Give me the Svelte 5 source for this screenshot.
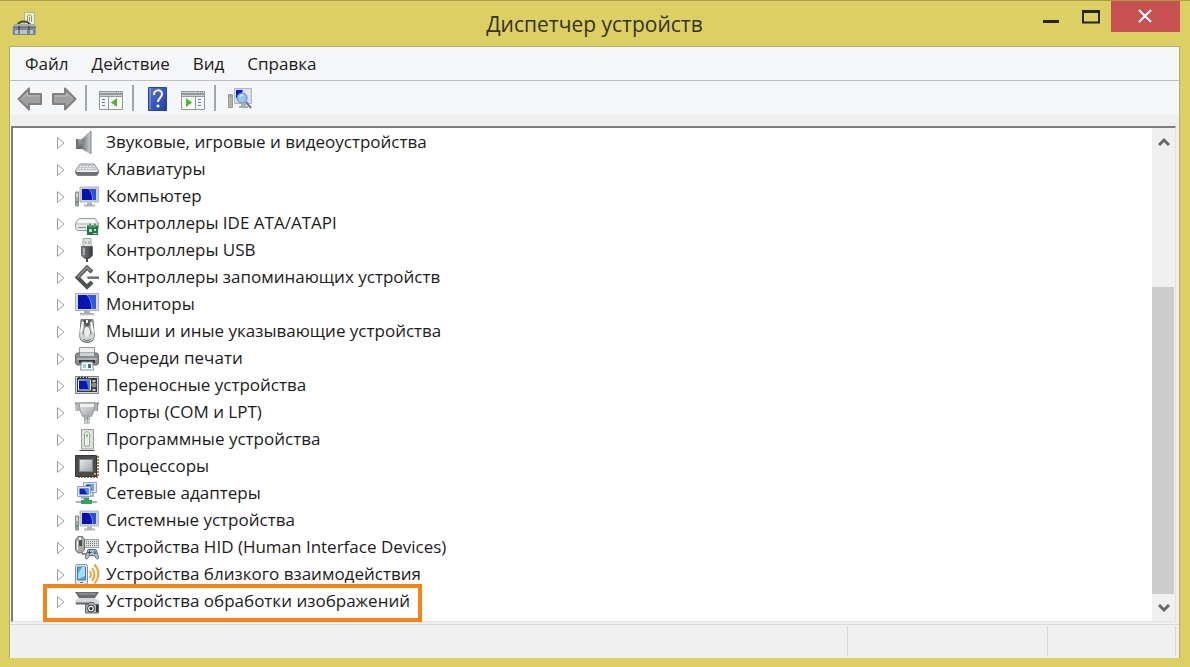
<script lang="ts">
  type Device = { icon: string; label: string; marked?: boolean }

  const menus = ['Файл', 'Действие', 'Вид', 'Справка']

  const devices: Device[] = [
    { icon: 'sound', label: 'Звуковые, игровые и видеоустройства' },
    { icon: 'keyboard', label: 'Клавиатуры' },
    { icon: 'computer', label: 'Компьютер' },
    { icon: 'ide', label: 'Контроллеры IDE ATA/ATAPI' },
    { icon: 'usb', label: 'Контроллеры USB' },
    { icon: 'storage', label: 'Контроллеры запоминающих устройств' },
    { icon: 'monitor', label: 'Мониторы' },
    { icon: 'mouse', label: 'Мыши и иные указывающие устройства' },
    { icon: 'printer', label: 'Очереди печати' },
    { icon: 'portable', label: 'Переносные устройства' },
    { icon: 'port', label: 'Порты (COM и LPT)' },
    { icon: 'software', label: 'Программные устройства' },
    { icon: 'cpu', label: 'Процессоры' },
    { icon: 'network', label: 'Сетевые адаптеры' },
    { icon: 'computer', label: 'Системные устройства' },
    { icon: 'hid', label: 'Устройства HID (Human Interface Devices)' },
    { icon: 'nfc', label: 'Устройства близкого взаимодействия' },
    { icon: 'imaging', label: 'Устройства обработки изображений', marked: true },
  ]

  let selected = $state('')
</script>

{#snippet deviceIcon(name: string)}
  <svg class="icon" viewBox="0 0 24 24" aria-hidden="true">
    {#if name === 'sound'}
      <path d="M1 9h7v10H1z" fill="url(#steel)" />
      <path d="M1 9h2v10H1z" fill="#6c6f71" />
      <path d="M7 9 15 1h1.500v23H15L7 19z" fill="url(#cone)" />
      <path d="M15 1h1.500v23H15z" fill="#9b9fa2" />
    {:else if name === 'keyboard'}
      <path d="M5 7h14l4.500 6.500v3l-2 2h-19l-2-2v-3z" fill="#dfe2e4" stroke="#8b8f92" />
      <path d="M5.500 8h13l3 5H2.500z" fill="#c2c5c7" />
      <path d="M5 9.500h14M4 11.500h16" stroke="#eef0f1" stroke-dasharray="2 1" />
      <path d="M1 14.500h22v2l-1.500 2h-19L1 16.500z" fill="#6c7073" />
      <path d="M2 14.500h20" stroke="#f5f5f5" />
    {:else if name === 'computer'}
      <path d="M5 3h18.500v15H5z" fill="#c8cdd0" stroke="#b3b8bb" />
      <path d="M7 5h14v11H7z" fill="#0713ad" />
      <path d="M14 5h7v11h-3c0-4-1-8-4-11z" fill="#2850d8" />
      <path d="M14 5c3 3 3.500 7 3.500 11" fill="none" stroke="#6d91f0" />
      <path d="M12 18.500h5v2h3v2H9v-2h3z" fill="#aeb4b7" />
      <path d="M.5 8h3v14h-3z" fill="#a4aaab" stroke="#878d8f" />
      <path d="M1 10h2M1 12h2" stroke="#fff" />
      <path d="M1 18h2" stroke="#43b649" stroke-width="2" />
    {:else if name === 'ide'}
      <path d="M4 7.500h16c2 2 3.500 4 3.500 6v3c0 2-1 3-3 3h-17c-2 0-3-1-3-3v-3c0-2 1.500-4 3.500-6z" fill="#e6e8e8" stroke="#969a9b" />
      <path d="M4 8.500h15l2.500 4h-20z" fill="#f7f7f7" />
      <path d="M1 13h22" stroke="#b1b5b5" />
      <path d="M3 16.500h8" stroke="#8b908f" />
      <path d="M12 14.500h11V24H12z" fill="#1f7546" />
      <path d="M14 12.500h2v3h3v-3h2v4h-7z" fill="#539d72" />
      <path d="M14 18h3v3h-3zM19 18h2v2h-2zM18 22h4v1h-4z" fill="#b8dbc5" />
    {:else if name === 'usb'}
      <path d="M8 .5h8v9H8z" fill="#e1e3e3" stroke="#a6a9aa" />
      <path d="M9.500 3h2v3h-2zM13 3h2v3h-2z" fill="#b5b8b9" />
      <path d="M6.500 8.500h11v8c0 2-2 3-3.500 4h-4c-1.500-1-3.500-2-3.500-4z" fill="url(#dark)" stroke="#626566" />
      <path d="M9 10v7" stroke="#a5a8a9" stroke-width="2" />
      <path d="M11 20h2v4h-2z" fill="#464849" />
    {:else if name === 'storage'}
      <path d="M17 7 12 2.500 2.500 12.500 12 22l5-5" fill="none" stroke="#4e5152" stroke-width="4" />
      <path d="M16 6 12 2.500 2.500 12.500" fill="none" stroke="#85898a" stroke-width="2" />
      <path d="M13 11h11v3H13l-1-1.500z" fill="#707475" />
      <path d="M13 11.500h11" stroke="#a5a9aa" />
    {:else if name === 'monitor'}
      <path d="M.5 1.500h23v17H.5z" fill="#d6d9da" stroke="#adb1b2" />
      <path d="M3 3h18v14H3z" fill="#0815b4" />
      <path d="M12 3h9v14h-4c0-5-1-10-5-14z" fill="#2f58dc" />
      <path d="M12 3c3.500 3 4.500 9 5 14" fill="none" stroke="#7498f0" />
      <path d="M9 19h6v2h4v2H5v-2h4z" fill="#a8adae" />
      <path d="M5 23h14" stroke="#d4d7d8" />
    {:else if name === 'mouse'}
      <path d="M6 .5h12l1 13c1 6-1 10-7 10s-8-4-7-10z" fill="#8e9293" stroke="#737778" />
      <path d="M7 2 5 14c-.5 6 2 8.500 7 8.500s7.500-2.500 7-8.500L17 2l-2 7c3 4 2 8-3 8s-6-4-3-8z" fill="#d2d5d6" />
      <path d="M8 1h8l-2 6h-4z" fill="#55595a" />
      <path d="M12 1v3" stroke="#f4f4f4" stroke-width="2" />
      <path d="M8 3 6 13M16 3l2 10" stroke="#f5f6f6" stroke-width="2" />
      <ellipse cx="12" cy="13" rx="3" ry="5" fill="#eceeee" />
      <path d="M8 20c2 2 6 2 8 0" fill="none" stroke="#66696a" />
    {:else if name === 'printer'}
      <path d="M4.500 1.500h15V9h-15z" fill="#eef0f0" stroke="#929697" />
      <path d="M2 7h20l1.500 2v8l-1.500 2H2L.5 17V9z" fill="#898d8f" stroke="#66696b" />
      <path d="M5 7h14v3H5z" fill="#cfd2d3" />
      <path d="M2 13h20" stroke="#d4d7d8" />
      <path d="M4 14h16v3H4z" fill="#343738" />
      <path d="M6.500 16h11l1 8h-13z" fill="#f6fbfc" stroke="#80999f" />
      <path d="M8 18h3v4H8z" fill="#8dd1e8" />
      <path d="M13 18h3v4h-3z" fill="#4e6f7c" />
    {:else if name === 'portable'}
      <path d="M.5 3.500h23v17H.5z" fill="#d5d8d8" stroke="#7c8081" />
      <path d="M2 5h20v14H2z" fill="#35383a" />
      <path d="M3.500 7h12v10h-12z" fill="#0718b3" stroke="#f5f5f5" />
      <path d="M10 7h5v10h-2c0-4-.5-7-3-10z" fill="#4774e8" />
      <path d="M3 4.500h10" stroke="#3f4244" stroke-dasharray="2 1" />
      <circle cx="19" cy="12" r="2.500" fill="#8b8f91" />
      <path d="M17.500 7h3v2h-3zM17.500 16h3v2h-3z" fill="#cdd0d1" />
    {:else if name === 'port'}
      <path d="M0 2h24v3h-2v6h-3l-2 6h-2v7H9v-7H7l-2-6H2V5H0z" fill="#b0b5b7" />
      <path d="M4 3h16l-1.500 9-3 4h-7l-3-4z" fill="url(#shine)" stroke="#999ea0" />
      <path d="M5 4h14v3H5z" fill="#eff1f1" />
      <path d="M9 17h6v3H9z" fill="#8b9092" />
      <path d="M11 17v7M14 17v7" stroke="#e8eaea" />
      <path d="M1 3v8M22.500 3v8" stroke="#8b9092" />
    {:else if name === 'software'}
      <path d="M6.500 2.500h12V22h-12z" fill="#dfe2e0" stroke="#989d9a" />
      <path d="M9.500 6.500c0-2 5-2 5 0V19h-5z" fill="#f7faf7" stroke="#8faa8a" />
      <path d="M12 7v3" stroke="#8cc77a" stroke-width="2" />
      <path d="M12 10v8" stroke="#d5dfd2" />
      <path d="M4.500 23.500h15" stroke="#4a4d4c" />
    {:else if name === 'cpu'}
      <path d="M3 22.500h20M22.500 2v20" stroke="#af7b41" stroke-width="3" stroke-dasharray="2 1" />
      <path d="M.5 1.500h21v21H.5z" fill="#4a4d4f" stroke="#36393b" />
      <path d="M4.500 5.500h13v12h-13z" fill="url(#shine)" stroke="#85888a" />
      <path d="M19 20h2" stroke="#f09b4c" stroke-width="2" />
    {:else if name === 'network'}
      <path d="M8.500 1.500h13v10h-13z" fill="#dce6ee" stroke="#93a5b4" />
      <path d="M11 3.500h8v6h-8z" fill="#123ac6" />
      <path d="m15 3.500 4 0v6h-2z" fill="#75a1f1" />
      <path d="M2.500 5.500h13v10h-13z" fill="#dce6ee" stroke="#93a5b4" />
      <path d="M4.500 7.500h9v6h-9z" fill="#0926bb" />
      <path d="M9 7.500h4.500v6H12z" fill="#5b87e8" />
      <path d="M6 17h8M18 12v3h-3" stroke="#a3b4bf" stroke-width="2" fill="none" />
      <path d="M1 21h21" stroke="#a6b7aa" stroke-width="2" />
      <path d="M9 17h5v2h3v4H6v-4h3z" fill="#31a463" />
    {:else if name === 'hid'}
      <path d="M9 4.500h14.500v8H9z" fill="#dfe2e3" stroke="#9a9e9f" />
      <path d="M11 6.500h12M11 8.500h12M11 10.500h12" stroke="#6f7678" stroke-dasharray="1 1" />
      <path d="M3 1.500h4.500l2 3v10L7 18H3L.5 15V5z" fill="#a7abad" stroke="#686d6f" />
      <path d="M5 2v3" stroke="#fff" stroke-width="2" />
      <path d="M4 5h3v6H4z" fill="#4d5051" />
      <path d="M2.500 6v9" stroke="#f0f1f1" />
      <path d="M7 19h4" stroke="#8a8e90" stroke-width="2" />
      <path d="M13 14.500h8l2.500 7c.5 3-2 3-3 1l-1-2h-5l-1 2c-1 2-4 2-3-1z" fill="#aebcc8" stroke="#5e6a74" />
      <path d="M12.500 17.500h4M14.500 15.500v4" stroke="#394650" />
      <circle cx="20" cy="17.500" r="1.500" fill="#3680ba" />
    {:else if name === 'nfc'}
      <rect x=".5" y="2.500" width="12" height="20" rx="2" fill="#e4e8ea" stroke="#8a8f93" />
      <path d="M2.500 5h8v13h-8z" fill="#4caae6" stroke="#3a7dac" />
      <path d="M7 5h3v9L3 17V12z" fill="#a5dcf8" />
      <path d="M5 20.500h3" stroke="#6a7176" />
      <path d="M14.500 9c1.500 2 1.500 5 0 7M17 6c3 4 3 9 0 13M19.500 2.500c5 6 5 13 0 19" fill="none" stroke="#f1a33c" stroke-width="2" />
    {:else if name === 'imaging'}
      <path d="M0 3h24l-4 6H4z" fill="#666c6f" />
      <path d="M3 4h18l-1 2H4z" fill="#858c8f" />
      <path d="M4 9h16l4 3v3H0v-3z" fill="#d3d7d8" />
      <path d="M1 14.500h13" stroke="#60686b" stroke-width="2" />
      <path d="M10.500 15.500h3l1-2h4l1 2h4V24h-13z" fill="#b0b6b8" stroke="#5d6467" />
      <circle cx="16" cy="19.500" r="3.500" fill="#e2e5e6" stroke="#343a3d" />
      <circle cx="16" cy="19.500" r="1.500" fill="#23282b" />
      <path d="M22 16v7" stroke="#303639" stroke-width="2" />
    {/if}
  </svg>
{/snippet}

<svelte:head>
  <title>Диспетчер устройств</title>
</svelte:head>

<svg class="defs" aria-hidden="true">
  <defs>
    <linearGradient id="steel" x1="0" x2="0" y1="0" y2="1">
      <stop offset="0" stop-color="#a5a9ab" /><stop offset="1" stop-color="#5e6264" />
    </linearGradient>
    <linearGradient id="cone" x1="0" x2="1" y1="0" y2="0">
      <stop offset="0" stop-color="#77797b" /><stop offset="1" stop-color="#d4d7d9" />
    </linearGradient>
    <linearGradient id="dark" x1="0" x2="1" y1="0" y2="0">
      <stop offset="0" stop-color="#828586" /><stop offset="1" stop-color="#35383a" />
    </linearGradient>
    <linearGradient id="shine" x1="0" x2="1" y1="0" y2="1">
      <stop offset="0" stop-color="#eceeee" /><stop offset="1" stop-color="#9ba0a2" />
    </linearGradient>
    <linearGradient id="help" x1="0" x2="1" y1="0" y2="1">
      <stop offset="0" stop-color="#5078db" /><stop offset="1" stop-color="#233f9f" />
    </linearGradient>
  </defs>
</svg>

<div class="window">
  <header class="titlebar">
    <svg class="titlebar__logo" viewBox="0 0 24 24" aria-hidden="true">
      <path d="M12.500.5h10v13h-10z" fill="#eaf0d4" stroke="#adb390" />
      <path d="M15.500 10V5c0-3 4-3 4 0v5M17.500 5v4" fill="none" stroke="#8d9869" />
      <path d="M5 14c2-6 11-6 14 0" fill="none" stroke="#484d4b" stroke-width="2" />
      <path d="M2 12h20l2 4v7H.5v-7z" fill="#a6adb0" />
      <path d="M1 15.500h23" stroke="#697277" stroke-width="2" />
      <path d="M1 17h22.500v6H1z" fill="#7b858b" />
      <path d="M3 18h3v4H3zM8 18h7v4H8zM18 18h3v4h-3z" fill="#b9c3c9" />
      <path d="M6 14h2v4H6zM16 14h2v4h-2z" fill="#4f595e" />
    </svg>
    <h1 class="titlebar__title">Диспетчер устройств</h1>
    <div class="titlebar__controls">
      <button class="control" type="button" aria-label="Свернуть">
        <svg viewBox="0 0 18 16"><path d="M1 12.500h16" stroke="#272410" stroke-width="3" /></svg>
      </button>
      <button class="control" type="button" aria-label="Развернуть">
        <svg viewBox="0 0 18 16"><path d="M1 2.500h16v11H1z" fill="none" stroke="#272410" stroke-width="2" /><path d="M0 2.500h18" stroke="#272410" stroke-width="3" /></svg>
      </button>
      <button class="control control--close" type="button" aria-label="Закрыть">
        <svg viewBox="0 0 18 16"><path d="m2 1 12 12M14 1 2 13" stroke="#fff" stroke-width="2" /></svg>
      </button>
    </div>
  </header>

  <main class="client">
    <nav class="menubar" aria-label="Меню">
      {#each menus as menu (menu)}
        <button class="menubar__item" type="button">{menu}</button>
      {/each}
    </nav>

    <div class="toolbar" role="toolbar" aria-label="Панель инструментов">
      <button class="tool" type="button" aria-label="Назад">
        <svg viewBox="0 0 26 26"><path d="M2.500 13 13 2.500V8h12v10H13v5.500z" fill="#a0a0a0" stroke="#808080" stroke-width="2" stroke-linejoin="round" /><path d="M6 12.500 11.500 7v3H23" fill="none" stroke="#bcbcbc" /></svg>
      </button>
      <button class="tool tool--next" type="button" aria-label="Вперёд">
        <svg viewBox="0 0 26 26"><path d="M24.500 13 14 2.500V8H2v10h12v5.500z" fill="#a0a0a0" stroke="#808080" stroke-width="2" stroke-linejoin="round" /><path d="M21 12.500 15.500 7v3H4" fill="none" stroke="#bcbcbc" /></svg>
      </button>
      <span class="toolbar__divider"></span>
      <button class="tool" type="button" aria-label="Дерево консоли">
        <svg viewBox="0 0 26 26">
          <path d="M1.500 5.500h23v18h-23z" fill="#f7f8f8" stroke="#929799" />
          <path d="M1 5h24v6H1z" fill="#939a9e" /><path d="M2 6.500h16M2 9.500h22" stroke="#cdd1d3" /><path d="M19 6.500h5" stroke="#f2f2f2" stroke-dasharray="1 1" />
          <path d="M10.500 11v12" stroke="#929799" /><path d="M4 13.500h4M4 16.500h4M4 19.500h4" stroke="#5683b0" stroke-dasharray="3 1" />
          <path d="M19 12v9l-6-4.500z" fill="#52b52e" />
        </svg>
      </button>
      <span class="toolbar__divider"></span>
      <button class="tool" type="button" aria-label="Справка">
        <svg viewBox="0 0 26 26">
          <path d="M3.500 1.500h18v23h-18z" fill="url(#help)" stroke="#28469c" /><path d="M5 2v22" stroke="#849fe4" />
          <path d="M9 9c0-6 8-6 8-1 0 4-4 4-4 8" fill="none" stroke="#fff" stroke-width="2" /><circle cx="13" cy="20" r="1.500" fill="#fff" />
        </svg>
      </button>
      <button class="tool tool--next" type="button" aria-label="Панель действий">
        <svg viewBox="0 0 26 26">
          <path d="M1.500 5.500h23v18h-23z" fill="#f7f8f8" stroke="#929799" />
          <path d="M1 5h24v6H1z" fill="#939a9e" /><path d="M2 6.500h16M2 9.500h22" stroke="#cdd1d3" /><path d="M19 6.500h5" stroke="#f2f2f2" stroke-dasharray="1 1" />
          <path d="M15.500 11v12" stroke="#929799" /><path d="M18 13.500h4M18 16.500h4M18 19.500h4" stroke="#5683b0" stroke-dasharray="3 1" />
          <path d="M6 12v9l6-4.500z" fill="#52b52e" />
        </svg>
      </button>
      <span class="toolbar__divider"></span>
      <button class="tool" type="button" aria-label="Обновить конфигурацию оборудования">
        <svg viewBox="0 0 26 26">
          <path d="M7.500 2.500h17v15h-17z" fill="#d6d9dc" stroke="#b5b9bc" />
          <path d="M9 4h14v11H9z" fill="#dfe5ee" /><path d="M9 4h7l-3 8H9z" fill="#1021b8" />
          <path d="M14 18h5v2h2v2h-9v-2h2z" fill="#a9aeb1" />
          <path d="M1.500 8.500h4v13h-4z" fill="#b1b5ac" stroke="#969b93" /><path d="M3.500 9v2" stroke="#45ac43" />
          <circle cx="15" cy="12" r="5" fill="#98c6f5" stroke="#5686bf" /><path d="M13 11c0-2 1-2 3-2" fill="none" stroke="#fff" />
          <path d="m19 16 5 6" stroke="#6e7880" stroke-width="2" />
        </svg>
      </button>
    </div>

    <section class="pane">
      <ul class="tree">
        {#each devices as device (device.label)}
          <li class="tree__item" class:tree__item--marked={device.marked}>
            <button
              class="tree__row"
              class:tree__row--selected={selected === device.label}
              type="button"
              onclick={() => (selected = device.label)}
            >
              <svg class="tree__arrow" viewBox="0 0 10 14" aria-hidden="true">
                <path d="M1.500 1.500 8 7l-6.500 5.500z" fill="#fff" stroke="#a0a0a0" />
              </svg>
              {@render deviceIcon(device.icon)}
              <span class="tree__label">{device.label}</span>
            </button>
          </li>
        {/each}
      </ul>
      <div class="scroll">
        <button class="scroll__button" type="button" aria-label="Вверх">
          <svg viewBox="0 0 12 12"><path d="m1 9 5-5 5 5" fill="none" stroke="#666" stroke-width="3" /></svg>
        </button>
        <div class="scroll__track"><div class="scroll__thumb"></div></div>
        <button class="scroll__button" type="button" aria-label="Вниз">
          <svg viewBox="0 0 12 12"><path d="m1 3 5 5 5-5" fill="none" stroke="#666" stroke-width="3" /></svg>
        </button>
      </div>
    </section>

    <footer class="status">
      <span class="status__cell status__cell--main"></span>
      <span class="status__cell"></span>
      <span class="status__cell status__cell--last"></span>
    </footer>
  </main>
</div>

<style>
  :global(body) {
    background: #dccf63;
  }
  button {
    padding: 0;
    border: 0;
    background: transparent;
    color: inherit;
    font: inherit;
  }
  button:focus-visible {
    outline: 1px dotted #333;
  }
  svg {
    display: block;
  }
  .defs {
    position: absolute;
    width: 0;
    height: 0;
  }
  .window {
    box-sizing: border-box;
    display: flex;
    flex-direction: column;
    min-height: 100vh;
    padding: 0 10px 9px 9px;
    border-top: 1px solid #ab9d45;
    background: #dccf63;
    color: #1d1a22;
    font-family: 'Open Sans', 'Noto Sans', sans-serif;
    font-size: 17px;
  }
  .titlebar {
    display: grid;
    grid-template-columns: 1fr auto 1fr;
    height: 45px;
  }
  .titlebar__logo {
    width: 24px;
    height: 24px;
    margin: 11px 0 0 3px;
  }
  .titlebar__title {
    margin: 0;
    color: #37321a;
    font-size: 21px;
    font-weight: 400;
    line-height: 47px;
  }
  .titlebar__controls {
    display: flex;
    justify-content: flex-end;
    align-items: flex-start;
  }
  .control {
    display: grid;
    place-items: center;
    width: 40px;
    height: 31px;
  }
  .control svg {
    width: 18px;
    height: 16px;
  }
  .control--close {
    width: 69px;
    background: #c75050;
  }
  .client {
    flex: 1;
    display: flex;
    flex-direction: column;
    border: 1px solid #b8ad68;
    border-bottom: 0;
    background: #f0f0f0;
  }
  .menubar {
    display: flex;
    gap: 23px;
    height: 33px;
    padding: 0 15px;
    border-bottom: 1px solid #bfbfbf;
    background: #f5f6f7;
  }
  .toolbar {
    display: flex;
    align-items: center;
    height: 34px;
    padding: 0 6px;
    margin-bottom: 11px;
    background: #f5f6f7;
  }
  .tool {
    padding: 5px 0 3px;
  }
  .tool svg {
    width: 26px;
    height: 26px;
  }
  .tool--next {
    margin-left: 9px;
  }
  .toolbar__divider {
    width: 2px;
    height: 26px;
    margin: 0 11px 0 8px;
    background: #a5a5a5;
  }
  .pane {
    flex: 1;
    display: flex;
    margin: 0 3px 2px 1px;
    border: solid #7e7e7e;
    border-width: 2px 0 0 2px;
    border-right: 1px solid #e3e3e3;
    border-bottom: 1px solid #e3e3e3;
    background: #fff;
  }
  .tree {
    flex: 1;
    margin: 0;
    padding: 0 0 7px 43px;
    list-style: none;
  }
  .tree__item {
    position: relative;
    width: fit-content;
  }
  .tree__item--marked::after {
    content: '';
    position: absolute;
    inset: -3px -12px -8px -13px;
    border: 4px solid #f58414;
    pointer-events: none;
  }
  .tree__row {
    display: flex;
    align-items: center;
    height: 27px;
    white-space: nowrap;
  }
  .tree__row--selected .tree__label {
    background: #cbe8f6;
  }
  .tree__arrow {
    width: 10px;
    height: 14px;
    margin: 3px 9px 0 0;
  }
  .icon {
    width: 24px;
    height: 24px;
    margin-right: 7px;
    overflow: visible;
  }
  .tree__label {
    line-height: 27px;
  }
  .scroll {
    display: flex;
    flex-direction: column;
    width: 23px;
    background: #f0f0f0;
  }
  .scroll__button {
    display: grid;
    place-items: center;
    height: 27px;
  }
  .scroll__button svg {
    width: 12px;
    height: 12px;
  }
  .scroll__track {
    flex: 1;
    display: flex;
    flex-direction: column;
    justify-content: flex-end;
  }
  .scroll__thumb {
    height: 70%;
    margin-right: 1px;
    background: #cdcdcd;
  }
  .status {
    display: flex;
    height: 30px;
    padding: 1px 3px 2px 0;
    border-top: 1px solid #d9d9d9;
  }
  .status__cell {
    width: 199px;
    border-right: 1px solid #d7d7d7;
  }
  .status__cell--main {
    flex: 1;
  }
  .status__cell--last {
    width: 127px;
  }
</style>
